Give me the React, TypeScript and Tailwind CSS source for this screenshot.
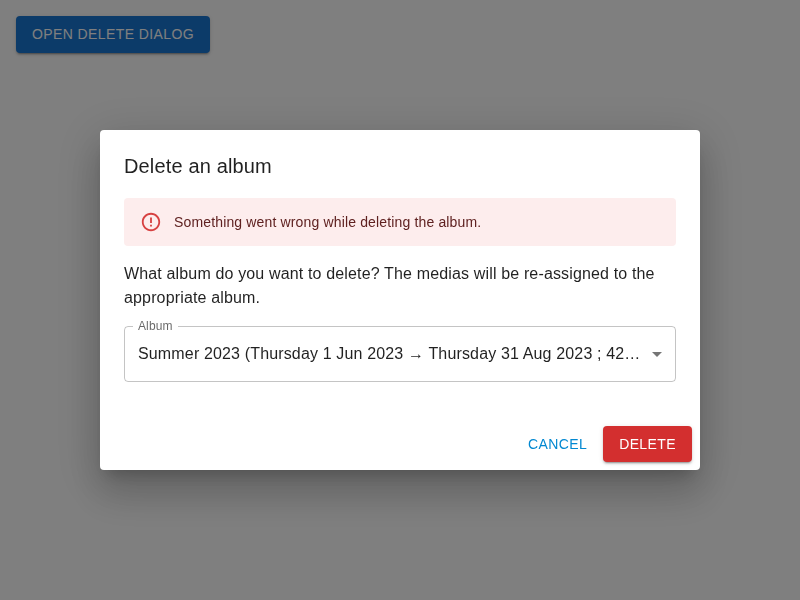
import React from "react";

function Backdrop() {
  return <div className="fixed inset-0 bg-black/50" />;
}

function ErrorAlert({ children }: { children: React.ReactNode }) {
  return (
    <div role="alert" className="flex rounded bg-[#fdeded] px-4 py-1.5 text-sm leading-[20.02px] tracking-[0.15008px] text-[#5f2120]">
      <span className="mr-3 flex py-[7px] text-[#d32f2f] opacity-90">
        <svg viewBox="0 0 24 24" className="size-[22px]" fill="currentColor">
          <path d="M11 15h2v2h-2zm0-8h2v6h-2zm.99-5C6.47 2 2 6.48 2 12s4.47 10 9.99 10C17.52 22 22 17.52 22 12S17.52 2 11.99 2zM12 20c-4.42 0-8-3.58-8-8s3.58-8 8-8 8 3.58 8 8-3.58 8-8 8z" />
        </svg>
      </span>
      <div className="py-2">{children}</div>
    </div>
  );
}

function AlbumSelect() {
  return (
    <div className="relative mt-4 flex h-14 items-center pl-3.5 pr-[7px] text-base leading-[23px] tracking-[0.15008px]">
      <fieldset className="pointer-events-none absolute inset-x-0 -top-[5px] bottom-0 min-w-0 rounded border border-black/[0.23] px-2">
        <legend className="block h-[11px] px-0 text-xs">
          <span className="inline-block px-[5px] opacity-0">Album</span>
        </legend>
      </fieldset>
      <label className="absolute left-3.5 -top-[9px] origin-top-left scale-75 text-base leading-[23px] tracking-[0.15008px] text-black/60">Album</label>
      <div className="min-w-0 flex-1 truncate pr-1 pb-0.5">
        Summer 2023 (Thursday 1 Jun 2023 → Thursday 31 Aug 2023 ; 42 medias)
      </div>
      <svg viewBox="0 0 24 24" className="size-6 shrink-0 text-black/[0.54]" fill="currentColor">
        <path d="M7 10l5 5 5-5z" />
      </svg>
    </div>
  );
}

export default function App() {
  return (
    <div className="h-[600px] overflow-hidden bg-white p-4 font-['Liberation_Sans',Arial,sans-serif] text-black/[0.87]">
      <button className="block rounded bg-[#1976d2] px-4 py-1.5 text-sm leading-[24.5px] tracking-[0.39998px] text-white shadow-[0px_3px_1px_-2px_rgba(0,0,0,0.2),0px_2px_2px_0px_rgba(0,0,0,0.14),0px_1px_5px_0px_rgba(0,0,0,0.12)]">
        OPEN DELETE DIALOG
      </button>
      <Backdrop />
      <div className="fixed inset-0 flex items-center justify-center">
        <div role="dialog" className="flex h-[340px] w-[600px] flex-col rounded bg-white shadow-[0px_11px_15px_-7px_rgba(0,0,0,0.2),0px_24px_38px_3px_rgba(0,0,0,0.14),0px_9px_46px_8px_rgba(0,0,0,0.12)]">
          <h2 className="px-6 pt-5 pb-4 text-xl leading-8 tracking-[0.15px]">Delete an album</h2>
          <div className="flex-1 px-6">
            <ErrorAlert>Something went wrong while deleting the album.</ErrorAlert>
            <p className="mt-4 text-base leading-6 tracking-[0.15008px]">
              What album do you want to delete? The medias will be re-assigned to the appropriate album.
            </p>
            <AlbumSelect />
          </div>
          <div className="flex items-center justify-end gap-2 p-2 text-sm leading-[24.5px] tracking-[0.39998px]">
            <button className="rounded px-2 py-1.5 text-[#0288d1]">CANCEL</button>
            <button className="rounded bg-[#d32f2f] px-4 py-1.5 text-white shadow-[0px_3px_1px_-2px_rgba(0,0,0,0.2),0px_2px_2px_0px_rgba(0,0,0,0.14),0px_1px_5px_0px_rgba(0,0,0,0.12)]">
              DELETE
            </button>
          </div>
        </div>
      </div>
    </div>
  );
}
